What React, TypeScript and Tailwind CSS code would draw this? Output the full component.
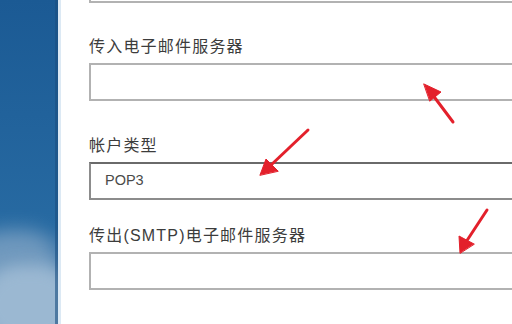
import React from "react";

function Field({ label, value, dark }: { label?: string; value?: string; dark?: boolean }) {
  return (
    <div className="flex flex-col">
      {label && (
        <div className="text-[16px] leading-[20px] tracking-[1.2px] text-[#3c3c3c] mb-[6px]">{label}</div>
      )}
      <div
        className={`h-[38px] w-[450px] shrink-0 border-2 bg-white flex items-center pl-[14px] text-[14.5px] text-[#4a4a4a] ${
          dark ? "border-[#8c8c8c] border-t-[#6a6a6a]" : "border-[#b2b2b2]"
        }`}
      >
        {value}
      </div>
    </div>
  );
}

export default function App() {
  return (
    <div
      className="relative w-[512px] h-[324px] overflow-hidden flex bg-white"
      style={{ fontFamily: "'Liberation Sans', 'Noto Sans CJK SC', sans-serif" }}
    >
      {/* Sky backdrop on the left */}
      <div className="relative w-[58px] shrink-0 h-full overflow-hidden bg-gradient-to-b from-[#1b5a94] via-[#276aa2] via-70% to-[#5b8bb5]">
        <div className="absolute left-[-30px] top-[230px] w-[90px] h-[70px] rounded-full bg-[#7fa3c4] blur-[10px] opacity-80" />
        <div className="absolute left-[-20px] top-[265px] w-[100px] h-[80px] rounded-full bg-[#9bb8d2] blur-[8px]" />
        <div className="absolute right-0 top-0 w-[3px] h-full bg-[#1a4f80] opacity-60" />
      </div>
      <div className="w-[3px] shrink-0 h-full bg-[#dce9f4]" />

      {/* Form */}
      <div className="flex-1 min-w-0 overflow-hidden pl-[28px] flex flex-col">
        <div className="-mt-[35px]">
          <Field />
        </div>
        <div className="mt-[34px]">
          <Field label="传入电子邮件服务器" />
        </div>
        <div className="mt-[35px]">
          <Field label="帐户类型" value="POP3" dark />
        </div>
        <div className="mt-[26px]">
          <Field label="传出(SMTP)电子邮件服务器" />
        </div>
      </div>

      {/* Red annotation arrows */}
      <svg className="absolute inset-0 pointer-events-none" width="512" height="324" viewBox="0 0 512 324">
        <g fill="#e3202b" stroke="#e3202b" strokeLinecap="round">
          <line x1="453" y1="122" x2="432" y2="94" strokeWidth="3" />
          <polygon points="424,84 441,92 430,101" strokeWidth="1" />
          <line x1="308" y1="130" x2="270" y2="166" strokeWidth="3" />
          <polygon points="260,175 266,159 278,171" strokeWidth="1" />
          <line x1="487" y1="210" x2="466" y2="242" strokeWidth="3" />
          <polygon points="460,253 459,236 474,244" strokeWidth="1" />
        </g>
      </svg>
    </div>
  );
}
